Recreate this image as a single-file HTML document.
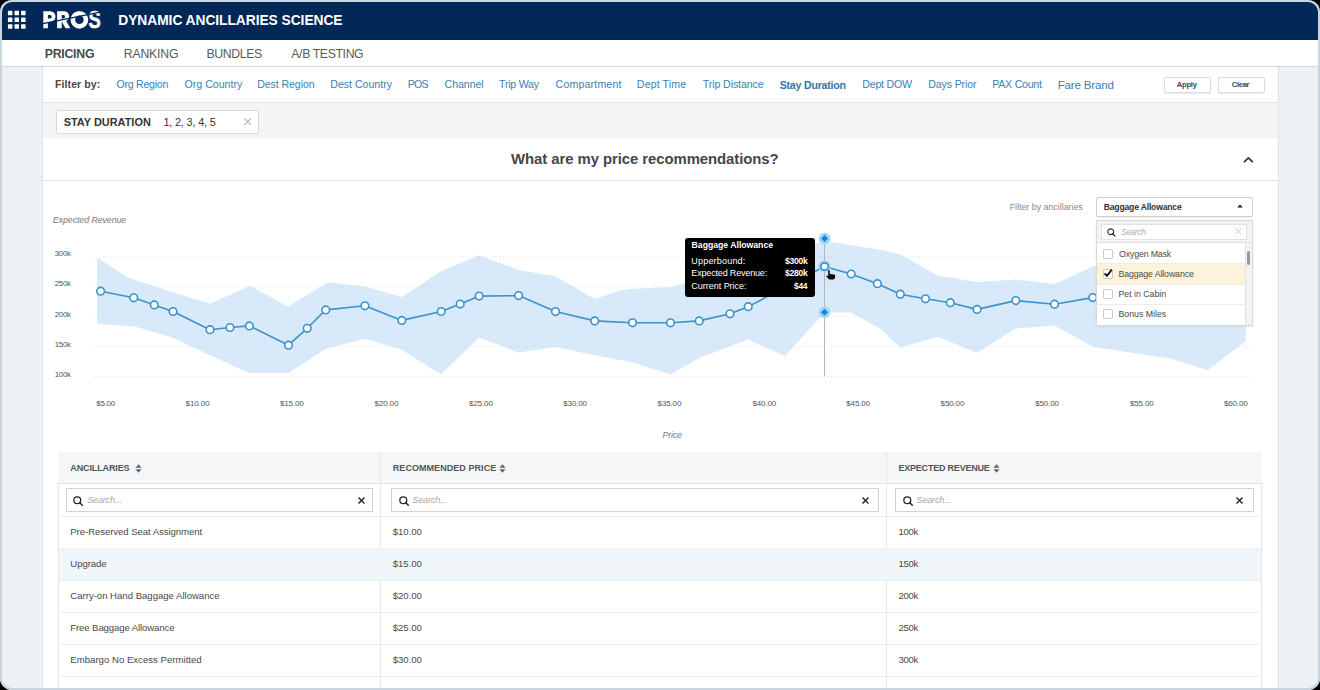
<!DOCTYPE html>
<html><head><meta charset="utf-8">
<style>
html,body{margin:0;padding:0;background:#000;width:1320px;height:690px;overflow:hidden;}
*{box-sizing:border-box;}
#wrap{position:absolute;left:0;top:0;width:1320px;height:690px;border-radius:12px;overflow:hidden;background:#edf1f5;}
.abs{position:absolute;}
.t{position:absolute;white-space:pre;line-height:1;font-family:"Liberation Sans",sans-serif;z-index:30;}
#frame{position:absolute;left:0;top:0;width:1320px;height:690px;border:2px solid #c9d6e2;border-radius:12px;z-index:100;}
</style></head><body>
<div id="wrap">
<!-- header -->
<div class="abs" style="left:0;top:0;width:1320px;height:39.5px;background:#012857;"></div>
<svg class="abs" style="left:0;top:0" width="40" height="40" viewBox="0 0 40 40">
<g fill="#fff">
<rect x="7.9" y="10.8" width="4.5" height="4.5" rx="0.6"/><rect x="14.5" y="10.8" width="4.5" height="4.5" rx="0.6"/><rect x="21.1" y="10.8" width="4.5" height="4.5" rx="0.6"/>
<rect x="7.9" y="17.5" width="4.5" height="4.5" rx="0.6"/><rect x="14.5" y="17.5" width="4.5" height="4.5" rx="0.6"/><rect x="21.1" y="17.5" width="4.5" height="4.5" rx="0.6"/>
<rect x="7.9" y="24.2" width="4.5" height="4.5" rx="0.6"/><rect x="14.5" y="24.2" width="4.5" height="4.5" rx="0.6"/><rect x="21.1" y="24.2" width="4.5" height="4.5" rx="0.6"/>
</g></svg>
<svg class="abs" style="left:0;top:0" width="110" height="40" viewBox="0 0 110 40">
<g fill="#fff" fill-rule="evenodd">
<path d="M43.3 11.3H50.2A5.3 5.3 0 0 1 50.2 21.9H47.9V28.3H43.3Z M47.9 14.9H50.0A1.75 1.75 0 0 1 50.0 18.4H47.9Z"/>
<path d="M57.1 11.3H63.6A5.05 5.05 0 0 1 66.2 20.9L70.4 28.3H65.5L62.0 21.9H61.7V28.3H57.1Z M61.7 14.9H63.3A1.75 1.75 0 0 1 63.3 18.4H61.7Z"/>
</g>
<circle cx="79.4" cy="19.8" r="6.6" fill="none" stroke="#fff" stroke-width="4.6"/>
<text x="88.6" y="28.4" font-family="Liberation Sans" font-weight="700" font-size="23.2" fill="#fff" stroke="#fff" stroke-width="0.6" textLength="12.2" lengthAdjust="spacingAndGlyphs">S</text>
<path d="M38 24.6 L104 11.3" stroke="#012857" stroke-width="1.3"/>
</svg>
<!-- nav -->
<div class="abs" style="left:0;top:39.5px;width:1320px;height:27.5px;background:#fff;border-bottom:1px solid #d3d8de;"></div>
<!-- main column -->
<div class="abs" style="left:42px;top:67px;width:1237px;height:630px;background:#fff;border-left:1px solid #dde2e7;border-right:1px solid #dde2e7;"></div>
<div class="abs" style="left:43px;top:102px;width:1235px;height:1px;background:#e2e4e6;"></div>
<div class="abs" style="left:43px;top:103px;width:1235px;height:35px;background:#f4f4f4;"></div>
<div class="abs" style="left:43px;top:180px;width:1235px;height:1px;background:#e0e2e4;"></div>
<!-- filter buttons -->
<div class="abs" style="left:1164px;top:77px;width:46.5px;height:15.5px;border:1px solid #dcdcdc;border-radius:2px;background:#fff;box-shadow:0 0.5px 1px rgba(0,0,0,0.08);"></div>
<div class="abs" style="left:1218px;top:77px;width:46.5px;height:15.5px;border:1px solid #dcdcdc;border-radius:2px;background:#fff;box-shadow:0 0.5px 1px rgba(0,0,0,0.08);"></div>
<!-- chip -->
<div class="abs" style="left:56px;top:109.5px;width:203px;height:24px;border:1px solid #d8d8d8;border-radius:2px;background:#fff;"></div>
<svg class="abs" style="left:243.8px;top:118.2px;z-index:35" width="7.4" height="7.4" viewBox="0 0 7.4 7.4"><path d="M0.5 0.5L6.9 6.9M6.9 0.5L0.5 6.9" stroke="#b5b5b5" stroke-width="1.1" fill="none"/></svg>
<!-- chart header caret -->
<svg class="abs" style="left:1240px;top:152px;z-index:35" width="16" height="14" viewBox="0 0 16 14"><path d="M4.0 10.2L8.4 5.9L12.8 10.2" fill="none" stroke="#333" stroke-width="1.75"/></svg>
<!-- chart -->
<svg class="abs" style="left:0;top:0" width="1320" height="690" viewBox="0 0 1320 690">
<polygon points="97,257.5 128,277.4 172,292 210,303.8 250,286 288,306.6 328,282.3 365,286.5 402,297 441,271.3 479,255.3 518.6,270 555.5,276.3 594.7,298.9 620,290.6 632.5,288.7 670.5,287.3 748,265 824.5,241 880,249.7 900.3,254.2 937.6,275.5 977,282 1015.8,279.4 1054.5,284 1092.7,266.4 1246,245 1246,341 1207.5,370.3 1171,358.8 1092.7,346.7 1054.5,325.5 1015.8,328.5 977,352.7 937.6,336.7 900.3,347.6 880,328.5 851,312.6 824.5,312.6 785,356 748,339.6 699.2,358 670.5,374.6 632.5,362.2 594.7,355.3 555.5,347 518.6,352.6 479,337.4 441,374.6 401.8,349.8 365,338.8 326.5,348.5 289,372.7 249,373 210,355.3 172,337.4 135,326.4 97,323.7" fill="#d8eaf9"/>
<line x1="95" y1="256.90" x2="1252" y2="256.90" stroke="#c4c9ce" stroke-width="1" stroke-dasharray="1.3 2.7" stroke-opacity="0.5"/><line x1="95" y1="286.85" x2="1252" y2="286.85" stroke="#c4c9ce" stroke-width="1" stroke-dasharray="1.3 2.7" stroke-opacity="0.5"/><line x1="95" y1="316.80" x2="1252" y2="316.80" stroke="#c4c9ce" stroke-width="1" stroke-dasharray="1.3 2.7" stroke-opacity="0.5"/><line x1="95" y1="346.75" x2="1252" y2="346.75" stroke="#c4c9ce" stroke-width="1" stroke-dasharray="1.3 2.7" stroke-opacity="0.5"/><line x1="95" y1="376.70" x2="1252" y2="376.70" stroke="#c4c9ce" stroke-width="1" stroke-dasharray="1.3 2.7" stroke-opacity="0.5"/>
<polyline points="100.6,291.2 133.7,297.8 154.3,304.9 173,311.5 210,329.7 230,327.5 249.4,325.9 288.5,345.2 307.2,328.3 325.7,309.9 364.9,305.8 401.8,320.4 441.2,311.5 460.2,304.1 479.2,296.1 518.6,295.6 555.5,311.5 594.7,320.9 632.5,322.8 670.5,322.8 699.2,320.9 730,313.8 748.2,306.7 824.5,266.5 851.2,274 877.4,283.7 900.3,294.2 925.5,298.8 950.3,302.7 977,309.4 1015.8,300.6 1054.5,304.2 1092.7,297.6 1131,290 1170,292 1208,285 1240,280" fill="none" stroke="#3b92cd" stroke-width="1.6" stroke-linejoin="round"/>
<circle cx="100.6" cy="291.2" r="3.8" fill="#fff" stroke="#3b92cd" stroke-width="1.6"/><circle cx="133.7" cy="297.8" r="3.8" fill="#fff" stroke="#3b92cd" stroke-width="1.6"/><circle cx="154.3" cy="304.9" r="3.8" fill="#fff" stroke="#3b92cd" stroke-width="1.6"/><circle cx="173" cy="311.5" r="3.8" fill="#fff" stroke="#3b92cd" stroke-width="1.6"/><circle cx="210" cy="329.7" r="3.8" fill="#fff" stroke="#3b92cd" stroke-width="1.6"/><circle cx="230" cy="327.5" r="3.8" fill="#fff" stroke="#3b92cd" stroke-width="1.6"/><circle cx="249.4" cy="325.9" r="3.8" fill="#fff" stroke="#3b92cd" stroke-width="1.6"/><circle cx="288.5" cy="345.2" r="3.8" fill="#fff" stroke="#3b92cd" stroke-width="1.6"/><circle cx="307.2" cy="328.3" r="3.8" fill="#fff" stroke="#3b92cd" stroke-width="1.6"/><circle cx="325.7" cy="309.9" r="3.8" fill="#fff" stroke="#3b92cd" stroke-width="1.6"/><circle cx="364.9" cy="305.8" r="3.8" fill="#fff" stroke="#3b92cd" stroke-width="1.6"/><circle cx="401.8" cy="320.4" r="3.8" fill="#fff" stroke="#3b92cd" stroke-width="1.6"/><circle cx="441.2" cy="311.5" r="3.8" fill="#fff" stroke="#3b92cd" stroke-width="1.6"/><circle cx="460.2" cy="304.1" r="3.8" fill="#fff" stroke="#3b92cd" stroke-width="1.6"/><circle cx="479.2" cy="296.1" r="3.8" fill="#fff" stroke="#3b92cd" stroke-width="1.6"/><circle cx="518.6" cy="295.6" r="3.8" fill="#fff" stroke="#3b92cd" stroke-width="1.6"/><circle cx="555.5" cy="311.5" r="3.8" fill="#fff" stroke="#3b92cd" stroke-width="1.6"/><circle cx="594.7" cy="320.9" r="3.8" fill="#fff" stroke="#3b92cd" stroke-width="1.6"/><circle cx="632.5" cy="322.8" r="3.8" fill="#fff" stroke="#3b92cd" stroke-width="1.6"/><circle cx="670.5" cy="322.8" r="3.8" fill="#fff" stroke="#3b92cd" stroke-width="1.6"/><circle cx="699.2" cy="320.9" r="3.8" fill="#fff" stroke="#3b92cd" stroke-width="1.6"/><circle cx="730" cy="313.8" r="3.8" fill="#fff" stroke="#3b92cd" stroke-width="1.6"/><circle cx="748.2" cy="306.7" r="3.8" fill="#fff" stroke="#3b92cd" stroke-width="1.6"/><circle cx="851.2" cy="274" r="3.8" fill="#fff" stroke="#3b92cd" stroke-width="1.6"/><circle cx="877.4" cy="283.7" r="3.8" fill="#fff" stroke="#3b92cd" stroke-width="1.6"/><circle cx="900.3" cy="294.2" r="3.8" fill="#fff" stroke="#3b92cd" stroke-width="1.6"/><circle cx="925.5" cy="298.8" r="3.8" fill="#fff" stroke="#3b92cd" stroke-width="1.6"/><circle cx="950.3" cy="302.7" r="3.8" fill="#fff" stroke="#3b92cd" stroke-width="1.6"/><circle cx="977" cy="309.4" r="3.8" fill="#fff" stroke="#3b92cd" stroke-width="1.6"/><circle cx="1015.8" cy="300.6" r="3.8" fill="#fff" stroke="#3b92cd" stroke-width="1.6"/><circle cx="1054.5" cy="304.2" r="3.8" fill="#fff" stroke="#3b92cd" stroke-width="1.6"/><circle cx="1092.7" cy="297.6" r="3.8" fill="#fff" stroke="#3b92cd" stroke-width="1.6"/><circle cx="1131" cy="290" r="3.8" fill="#fff" stroke="#3b92cd" stroke-width="1.6"/><circle cx="1170" cy="292" r="3.8" fill="#fff" stroke="#3b92cd" stroke-width="1.6"/><circle cx="1208" cy="285" r="3.8" fill="#fff" stroke="#3b92cd" stroke-width="1.6"/><circle cx="1240" cy="280" r="3.8" fill="#fff" stroke="#3b92cd" stroke-width="1.6"/>
<line x1="824.5" y1="238" x2="824.5" y2="376.5" stroke="#a9b1b9" stroke-width="0.9"/>
<circle cx="824.6" cy="238.5" r="5.7" fill="#a6cdee"/><circle cx="824.6" cy="238.5" r="4.5" fill="#9adbfa"/><path d="M824.6 235.0 L828.1 238.5 L824.6 242.0 L821.1 238.5 Z" fill="#1583db"/>
<circle cx="824.5" cy="312.3" r="5.7" fill="#a6cdee"/><circle cx="824.5" cy="312.3" r="4.5" fill="#9adbfa"/><path d="M824.5 308.8 L828.0 312.3 L824.5 315.8 L821.0 312.3 Z" fill="#1583db"/>
<circle cx="824.5" cy="266.5" r="6.3" fill="#a6d2f4" fill-opacity="0.85"/>
<circle cx="824.5" cy="266.5" r="3.7" fill="#fff" stroke="#3d95d8" stroke-width="1.8"/>
</svg>
<!-- tooltip -->
<div class="abs" style="left:685px;top:238px;width:129.5px;height:58.5px;background:#000;border-radius:3px;z-index:20;"></div>
<svg class="abs" style="left:820px;top:265px;z-index:40" width="20" height="20" viewBox="820 265 20 20">
<path d="M828.2 270.4 Q828.9 269.3 829.7 270.4 L829.8 273.9 L834.2 274.4 Q835.3 274.7 835.2 276.0 L834.9 278.3 Q834.6 279.4 833.3 279.5 L829.6 279.5 Q828.8 279.4 828.2 278.6 L826.3 276.4 Q825.9 275.6 826.8 275.4 L828.2 276.1 Z" fill="#0d0d0d"/>
</svg>
<!-- dropdown -->
<div class="abs" style="left:1095.5px;top:197px;width:157px;height:19.6px;border:1px solid #cfcfcf;border-radius:2px;background:#fff;z-index:20;box-shadow:0 1px 1px rgba(0,0,0,0.06);"></div>
<svg class="abs" style="left:1236px;top:203px;z-index:35" width="8" height="6" viewBox="0 0 8 6"><path d="M4 1.6L6.9 4.6H1.1Z" fill="#222"/></svg>
<div class="abs" style="left:1095.5px;top:219.5px;width:157px;height:106px;border:1px solid #d9d9d9;background:#fff;z-index:20;box-shadow:0 1px 2px rgba(0,0,0,0.08);"></div>
<div class="abs" style="left:1096.5px;top:220.5px;width:155px;height:22.5px;background:#f3f3f3;border-bottom:1px solid #dedede;z-index:21;"></div>
<div class="abs" style="left:1100.5px;top:224px;width:146.5px;height:15.8px;background:#fff;border:1px solid #e2e2e2;z-index:22;"></div>
<svg class="abs" style="left:1107.2px;top:228.2px;z-index:35" width="9.2" height="9.2" viewBox="0 0 9.2 9.2"><circle cx="3.752" cy="3.752" r="2.9519999999999995" fill="none" stroke="#333" stroke-width="1.2"/><path d="M5.677439999999999 5.677439999999999L7.8999999999999995 7.8999999999999995" stroke="#333" stroke-width="1.38" stroke-linecap="round"/></svg>
<svg class="abs" style="left:1235.2px;top:228.3px;z-index:35" width="6.6" height="6.6" viewBox="0 0 6.6 6.6"><path d="M0.5 0.5L6.1 6.1M6.1 0.5L0.5 6.1" stroke="#c4c4c4" stroke-width="1.0" fill="none"/></svg>
<div class="abs" style="left:1096.5px;top:264px;width:148px;height:20px;background:#fdf3da;z-index:21;"></div>
<div class="abs" style="left:1096.5px;top:263px;width:148px;height:1px;background:#ececec;z-index:21;"></div>
<div class="abs" style="left:1096.5px;top:284px;width:148px;height:1px;background:#ececec;z-index:21;"></div>
<div class="abs" style="left:1096.5px;top:304px;width:148px;height:1px;background:#ececec;z-index:21;"></div>
<div class="abs" style="left:1244.5px;top:243px;width:7.5px;height:82px;background:#f3f3f3;border-left:1px solid #e2e2e2;z-index:21;"></div>
<div class="abs" style="left:1246.6px;top:251px;width:3.8px;height:13.5px;background:#9a9a9a;border-radius:2px;z-index:22;"></div>
<div class="abs" style="left:1103px;top:249px;width:9.6px;height:9.6px;border:1px solid #c9c9c9;border-radius:1.5px;background:#fff;z-index:22;"></div>
<div class="abs" style="left:1103px;top:269px;width:9.6px;height:9.6px;border:1px solid #c9c9c9;border-radius:1.5px;background:#fff;z-index:22;"></div>
<svg class="abs" style="left:1102px;top:267px;z-index:23" width="12" height="12" viewBox="0 0 12 12"><path d="M2.6 6.4L4.9 8.8L9.8 2.6" fill="none" stroke="#111" stroke-width="1.8"/></svg>
<div class="abs" style="left:1103px;top:289px;width:9.6px;height:9.6px;border:1px solid #c9c9c9;border-radius:1.5px;background:#fff;z-index:22;"></div>
<div class="abs" style="left:1103px;top:309px;width:9.6px;height:9.6px;border:1px solid #c9c9c9;border-radius:1.5px;background:#fff;z-index:22;"></div>
<!-- table -->
<div class="abs" style="left:57.5px;top:452px;width:1204.5px;height:240px;border-left:1px solid #e4e7ea;border-right:1px solid #e4e7ea;"></div>
<div class="abs" style="left:57.5px;top:452px;width:1204.5px;height:31.5px;background:#f5f6f8;border-bottom:1px solid #e0e3e7;"></div>
<div class="abs" style="left:380px;top:452px;width:1px;height:240px;background:#e6e9ec;"></div>
<div class="abs" style="left:885.5px;top:452px;width:1px;height:240px;background:#e6e9ec;"></div>
<div class="abs" style="left:58.5px;top:548px;width:1202.5px;height:32.4px;background:#f1f6fa;"></div>
<div class="abs" style="left:58.5px;top:515.8px;width:1202.5px;height:1px;background:#eceef0;"></div><div class="abs" style="left:58.5px;top:547.8px;width:1202.5px;height:1px;background:#eceef0;"></div><div class="abs" style="left:58.5px;top:580.2px;width:1202.5px;height:1px;background:#eceef0;"></div><div class="abs" style="left:58.5px;top:612.3px;width:1202.5px;height:1px;background:#eceef0;"></div><div class="abs" style="left:58.5px;top:644.3px;width:1202.5px;height:1px;background:#eceef0;"></div><div class="abs" style="left:58.5px;top:676.4px;width:1202.5px;height:1px;background:#eceef0;"></div>
<div class="abs" style="left:66px;top:488.3px;width:306.7px;height:23.7px;border:1px solid #cfd3d7;background:#fff;"></div>
<div class="abs" style="left:391px;top:488.3px;width:487.5px;height:23.7px;border:1px solid #cfd3d7;background:#fff;"></div>
<div class="abs" style="left:895.4px;top:488.3px;width:358.6px;height:23.7px;border:1px solid #cfd3d7;background:#fff;"></div>
<svg class="abs" style="left:73.3px;top:496.0px;z-index:35" width="10.6" height="10.6" viewBox="0 0 10.6 10.6"><circle cx="4.281" cy="4.281" r="3.456" fill="none" stroke="#222" stroke-width="1.25"/><path d="M6.56932 6.56932L9.299999999999999 9.299999999999999" stroke="#222" stroke-width="1.4375" stroke-linecap="round"/></svg>
<svg class="abs" style="left:398.5px;top:496.0px;z-index:35" width="10.6" height="10.6" viewBox="0 0 10.6 10.6"><circle cx="4.281" cy="4.281" r="3.456" fill="none" stroke="#222" stroke-width="1.25"/><path d="M6.56932 6.56932L9.299999999999999 9.299999999999999" stroke="#222" stroke-width="1.4375" stroke-linecap="round"/></svg>
<svg class="abs" style="left:902.8px;top:496.0px;z-index:35" width="10.6" height="10.6" viewBox="0 0 10.6 10.6"><circle cx="4.281" cy="4.281" r="3.456" fill="none" stroke="#222" stroke-width="1.25"/><path d="M6.56932 6.56932L9.299999999999999 9.299999999999999" stroke="#222" stroke-width="1.4375" stroke-linecap="round"/></svg>
<svg class="abs" style="left:358.2px;top:496.6px;z-index:35" width="7.0" height="7.0" viewBox="0 0 7.0 7.0"><path d="M0.5 0.5L6.5 6.5M6.5 0.5L0.5 6.5" stroke="#222" stroke-width="1.4" fill="none"/></svg>
<svg class="abs" style="left:861.8px;top:496.6px;z-index:35" width="7.0" height="7.0" viewBox="0 0 7.0 7.0"><path d="M0.5 0.5L6.5 6.5M6.5 0.5L0.5 6.5" stroke="#222" stroke-width="1.4" fill="none"/></svg>
<svg class="abs" style="left:1235.5px;top:496.6px;z-index:35" width="7.0" height="7.0" viewBox="0 0 7.0 7.0"><path d="M0.5 0.5L6.5 6.5M6.5 0.5L0.5 6.5" stroke="#222" stroke-width="1.4" fill="none"/></svg>
<svg class="abs" style="left:134.8px;top:464px;z-index:35" width="7" height="9" viewBox="0 0 7 9"><path d="M3.5 0.3L6.6 3.8H0.4Z M3.5 8.7L6.6 5.2H0.4Z" fill="#666"/></svg>
<svg class="abs" style="left:499.2px;top:464px;z-index:35" width="7" height="9" viewBox="0 0 7 9"><path d="M3.5 0.3L6.6 3.8H0.4Z M3.5 8.7L6.6 5.2H0.4Z" fill="#666"/></svg>
<svg class="abs" style="left:993.2px;top:464px;z-index:35" width="7" height="9" viewBox="0 0 7 9"><path d="M3.5 0.3L6.6 3.8H0.4Z M3.5 8.7L6.6 5.2H0.4Z" fill="#666"/></svg>
<div class="t" style="left:118.30px;top:13.57px;font-size:13.80px;letter-spacing:-0.052px;color:#ffffff;font-weight:700;">DYNAMIC ANCILLARIES SCIENCE</div><div class="t" style="left:44.70px;top:48.14px;font-size:12.30px;letter-spacing:-0.242px;color:#4a4a4a;font-weight:700;">PRICING</div><div class="t" style="left:123.72px;top:48.14px;font-size:12.30px;letter-spacing:-0.209px;color:#5a5a5a;">RANKING</div><div class="t" style="left:206.52px;top:48.14px;font-size:12.30px;letter-spacing:-0.399px;color:#5a5a5a;">BUNDLES</div><div class="t" style="left:291.30px;top:48.14px;font-size:12.30px;letter-spacing:-0.392px;color:#5a5a5a;">A/B TESTING</div><div class="t" style="left:55.10px;top:79.48px;font-size:10.60px;letter-spacing:0.043px;color:#4a4a4a;font-weight:700;">Filter by:</div><div class="t" style="left:116.50px;top:79.48px;font-size:10.60px;letter-spacing:-0.264px;color:#3b81b2;">Org Region</div><div class="t" style="left:184.60px;top:79.48px;font-size:10.60px;letter-spacing:-0.009px;color:#3b81b2;">Org Country</div><div class="t" style="left:257.27px;top:79.48px;font-size:10.60px;letter-spacing:-0.097px;color:#3b81b2;">Dest Region</div><div class="t" style="left:330.27px;top:79.48px;font-size:10.60px;letter-spacing:-0.008px;color:#3b81b2;">Dest Country</div><div class="t" style="left:407.77px;top:79.48px;font-size:10.60px;letter-spacing:-0.752px;color:#3b81b2;">POS</div><div class="t" style="left:444.60px;top:79.48px;font-size:10.60px;letter-spacing:-0.060px;color:#3b81b2;">Channel</div><div class="t" style="left:499.10px;top:79.48px;font-size:10.60px;letter-spacing:-0.241px;color:#3b81b2;">Trip Way</div><div class="t" style="left:555.60px;top:79.48px;font-size:10.60px;letter-spacing:0.166px;color:#3b81b2;">Compartment</div><div class="t" style="left:636.87px;top:79.48px;font-size:10.60px;letter-spacing:0.120px;color:#3b81b2;">Dept Time</div><div class="t" style="left:702.80px;top:79.48px;font-size:10.60px;letter-spacing:-0.101px;color:#3b81b2;">Trip Distance</div><div class="t" style="left:862.27px;top:79.48px;font-size:10.60px;letter-spacing:-0.207px;color:#3b81b2;">Dept DOW</div><div class="t" style="left:928.27px;top:79.48px;font-size:10.60px;letter-spacing:-0.136px;color:#3b81b2;">Days Prior</div><div class="t" style="left:992.27px;top:79.48px;font-size:10.60px;letter-spacing:-0.245px;color:#3b81b2;">PAX Count</div><div class="t" style="left:779.70px;top:79.78px;font-size:10.60px;letter-spacing:-0.210px;color:#3275a6;font-weight:700;">Stay Duration</div><div class="t" style="left:1057.65px;top:78.63px;font-size:11.60px;letter-spacing:-0.194px;color:#3b81b2;">Fare Brand</div><div class="t" style="left:1176.80px;top:80.92px;font-size:7.60px;letter-spacing:-0.231px;color:#444;font-weight:700;">Apply</div><div class="t" style="left:1231.80px;top:80.92px;font-size:7.60px;letter-spacing:-0.315px;color:#444;font-weight:700;">Clear</div><div class="t" style="left:63.70px;top:117.12px;font-size:10.90px;letter-spacing:0.027px;color:#333;font-weight:700;">STAY DURATION</div><div class="t" style="left:163.40px;top:117.12px;font-size:10.90px;letter-spacing:-0.173px;color:#333;">1, 2, 3, 4, 5</div><div class="t" style="left:511.00px;top:151.94px;font-size:14.90px;letter-spacing:-0.063px;color:#464646;font-weight:700;">What are my price recommendations?</div><div class="t" style="left:52.80px;top:216.22px;font-size:8.90px;letter-spacing:-0.099px;color:#7a7a7a;font-style:italic;">Expected Revenue</div><div class="t" style="left:1009.70px;top:202.52px;font-size:8.90px;letter-spacing:-0.019px;color:#8a8a8a;">Filter by ancillaries</div><div class="t" style="left:54.70px;top:250.26px;font-size:7.90px;letter-spacing:-0.269px;color:#555;">300k</div><div class="t" style="left:54.70px;top:280.41px;font-size:7.90px;letter-spacing:-0.269px;color:#555;">250k</div><div class="t" style="left:54.70px;top:310.56px;font-size:7.90px;letter-spacing:-0.269px;color:#555;">200k</div><div class="t" style="left:54.70px;top:340.71px;font-size:7.90px;letter-spacing:-0.269px;color:#555;">150k</div><div class="t" style="left:54.70px;top:370.86px;font-size:7.90px;letter-spacing:-0.269px;color:#555;">100k</div><div class="t" style="left:96.20px;top:399.58px;font-size:8.00px;letter-spacing:-0.242px;color:#555;">$5.00</div><div class="t" style="left:185.60px;top:399.58px;font-size:8.00px;letter-spacing:-0.083px;color:#555;">$10.00</div><div class="t" style="left:280.00px;top:399.58px;font-size:8.00px;letter-spacing:-0.143px;color:#555;">$15.00</div><div class="t" style="left:374.60px;top:399.58px;font-size:8.00px;letter-spacing:-0.143px;color:#555;">$20.00</div><div class="t" style="left:469.10px;top:399.58px;font-size:8.00px;letter-spacing:-0.143px;color:#555;">$25.00</div><div class="t" style="left:563.30px;top:399.58px;font-size:8.00px;letter-spacing:-0.143px;color:#555;">$30.00</div><div class="t" style="left:657.60px;top:399.58px;font-size:8.00px;letter-spacing:-0.143px;color:#555;">$35.00</div><div class="t" style="left:752.40px;top:399.58px;font-size:8.00px;letter-spacing:-0.143px;color:#555;">$40.00</div><div class="t" style="left:846.30px;top:399.58px;font-size:8.00px;letter-spacing:-0.143px;color:#555;">$45.00</div><div class="t" style="left:940.60px;top:399.58px;font-size:8.00px;letter-spacing:-0.143px;color:#555;">$50.00</div><div class="t" style="left:1035.20px;top:399.58px;font-size:8.00px;letter-spacing:-0.143px;color:#555;">$50.00</div><div class="t" style="left:1129.90px;top:399.58px;font-size:8.00px;letter-spacing:-0.143px;color:#555;">$55.00</div><div class="t" style="left:1223.90px;top:399.58px;font-size:8.00px;letter-spacing:-0.143px;color:#555;">$60.00</div><div class="t" style="left:662.60px;top:431.22px;font-size:8.90px;letter-spacing:-0.237px;color:#7a7a7a;font-style:italic;">Price</div><div class="t" style="left:1103.70px;top:203.07px;font-size:8.60px;letter-spacing:-0.176px;color:#333;font-weight:700;">Baggage Allowance</div><div class="t" style="left:1121.10px;top:227.69px;font-size:8.70px;letter-spacing:-0.483px;color:#b0b0b0;font-style:italic;">Search</div><div class="t" style="left:1119.10px;top:249.60px;font-size:8.80px;letter-spacing:-0.170px;color:#4a4a4a;">Oxygen Mask</div><div class="t" style="left:1118.50px;top:269.60px;font-size:8.80px;letter-spacing:-0.122px;color:#4a4a4a;">Baggage Allowance</div><div class="t" style="left:1118.50px;top:289.60px;font-size:8.80px;letter-spacing:-0.027px;color:#4a4a4a;">Pet in Cabin</div><div class="t" style="left:1118.50px;top:309.60px;font-size:8.80px;letter-spacing:-0.018px;color:#4a4a4a;">Bonus Miles</div><div class="t" style="left:691.60px;top:241.39px;font-size:8.70px;letter-spacing:-0.018px;color:#ffffff;font-weight:700;">Baggage Allowance</div><div class="t" style="left:691.30px;top:256.73px;font-size:9.00px;letter-spacing:0.198px;color:#ffffff;">Upperbound:</div><div class="t" style="left:691.30px;top:268.73px;font-size:9.00px;letter-spacing:-0.168px;color:#ffffff;">Expected Revenue:</div><div class="t" style="left:691.30px;top:282.13px;font-size:9.00px;letter-spacing:-0.022px;color:#ffffff;">Current Price:</div><div class="t" style="left:784.90px;top:257.07px;font-size:8.60px;letter-spacing:-0.258px;color:#ffffff;font-weight:700;">$300k</div><div class="t" style="left:784.90px;top:269.07px;font-size:8.60px;letter-spacing:-0.258px;color:#ffffff;font-weight:700;">$280k</div><div class="t" style="left:794.10px;top:282.47px;font-size:8.60px;letter-spacing:-0.392px;color:#ffffff;font-weight:700;">$44</div><div class="t" style="left:70.30px;top:464.33px;font-size:9.00px;letter-spacing:-0.125px;color:#555;font-weight:700;">ANCILLARIES</div><div class="t" style="left:392.80px;top:464.33px;font-size:9.00px;letter-spacing:0.055px;color:#555;font-weight:700;">RECOMMENDED PRICE</div><div class="t" style="left:898.40px;top:464.33px;font-size:9.00px;letter-spacing:-0.203px;color:#555;font-weight:700;">EXPECTED REVENUE</div><div class="t" style="left:87.20px;top:495.96px;font-size:9.20px;letter-spacing:-0.244px;color:#aaa;font-style:italic;">Search...</div><div class="t" style="left:412.30px;top:495.96px;font-size:9.20px;letter-spacing:-0.244px;color:#aaa;font-style:italic;">Search...</div><div class="t" style="left:916.50px;top:495.96px;font-size:9.20px;letter-spacing:-0.244px;color:#aaa;font-style:italic;">Search...</div><div class="t" style="left:70.30px;top:526.62px;font-size:9.60px;letter-spacing:-0.074px;color:#4a4a4a;">Pre-Reserved Seat Assignment</div><div class="t" style="left:392.80px;top:526.62px;font-size:9.60px;letter-spacing:-0.053px;color:#4a4a4a;">$10.00</div><div class="t" style="left:898.40px;top:526.62px;font-size:9.60px;letter-spacing:-0.321px;color:#4a4a4a;">100k</div><div class="t" style="left:70.30px;top:558.82px;font-size:9.60px;letter-spacing:-0.071px;color:#4a4a4a;">Upgrade</div><div class="t" style="left:392.80px;top:558.82px;font-size:9.60px;letter-spacing:-0.053px;color:#4a4a4a;">$15.00</div><div class="t" style="left:898.40px;top:558.82px;font-size:9.60px;letter-spacing:-0.321px;color:#4a4a4a;">150k</div><div class="t" style="left:70.30px;top:591.02px;font-size:9.60px;letter-spacing:-0.018px;color:#4a4a4a;">Carry-on Hand Baggage Allowance</div><div class="t" style="left:392.80px;top:591.02px;font-size:9.60px;letter-spacing:-0.053px;color:#4a4a4a;">$20.00</div><div class="t" style="left:898.40px;top:591.02px;font-size:9.60px;letter-spacing:-0.321px;color:#4a4a4a;">200k</div><div class="t" style="left:70.30px;top:623.22px;font-size:9.60px;letter-spacing:-0.116px;color:#4a4a4a;">Free Baggage Allowance</div><div class="t" style="left:392.80px;top:623.22px;font-size:9.60px;letter-spacing:-0.053px;color:#4a4a4a;">$25.00</div><div class="t" style="left:898.40px;top:623.22px;font-size:9.60px;letter-spacing:-0.321px;color:#4a4a4a;">250k</div><div class="t" style="left:70.30px;top:655.42px;font-size:9.60px;letter-spacing:0.008px;color:#4a4a4a;">Embargo No Excess Permitted</div><div class="t" style="left:392.80px;top:655.42px;font-size:9.60px;letter-spacing:-0.053px;color:#4a4a4a;">$30.00</div><div class="t" style="left:898.40px;top:655.42px;font-size:9.60px;letter-spacing:-0.321px;color:#4a4a4a;">300k</div>
</div>
<div id="frame"></div>
</body></html>
